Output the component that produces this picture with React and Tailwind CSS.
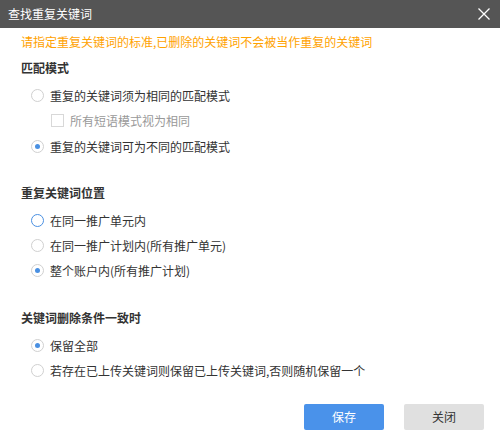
import React from "react";

const font = { fontFamily: '"Noto Sans CJK SC", "Noto Sans", sans-serif' };

function Radio({ checked, focus, label }) {
  return (
    <div className="flex h-[25px] items-center pl-[10px]">
      <span
        className={`flex h-[13px] w-[13px] items-center justify-center rounded-full border bg-white ${
          focus ? "border-[#4a90e2]" : "border-[#d0d0d0]"
        }`}
      >
        {checked && <span className="h-[5px] w-[5px] rounded-full bg-[#4a90e2]" />}
      </span>
      <span className="ml-[6px] text-[12px] leading-none text-[#333]">{label}</span>
    </div>
  );
}

function Title({ children, className = "" }) {
  return (
    <div className={`flex h-[20px] items-center text-[12px] font-bold leading-none text-[#333] ${className}`}>
      {children}
    </div>
  );
}

export default function App() {
  return (
    <div className="flex h-[446px] w-[500px] flex-col bg-white" style={font}>
      <div className="flex h-[28px] items-center justify-between bg-[#555555] pl-[8px] pr-[10px]">
        <span className="text-[12px] leading-none text-white">查找重复关键词</span>
        <svg width="12" height="12" viewBox="0 0 12 12" className="block">
          <path d="M0.5 0.5 L11.5 11.5 M11.5 0.5 L0.5 11.5" stroke="#fff" strokeWidth="1.3" />
        </svg>
      </div>
      <div className="flex flex-col px-[21px]">
        <div className="mt-[4px] flex h-[20px] items-center text-[12px] leading-none text-[#ffa200]">
          请指定重复关键词的标准,已删除的关键词不会被当作重复的关键词
        </div>
        <Title className="mt-[6px]">匹配模式</Title>
        <div className="mt-[5px]">
          <Radio label="重复的关键词须为相同的匹配模式" />
          <div className="flex h-[25px] items-center pl-[30px]">
            <span className="h-[13px] w-[13px] border border-[#d8d8d8] bg-white" />
            <span className="ml-[6px] text-[12px] leading-none text-[#999]">所有短语模式视为相同</span>
          </div>
          <div className="mt-[1px]">
            <Radio checked label="重复的关键词可为不同的匹配模式" />
          </div>
        </div>
        <Title className="mt-[24px]">重复关键词位置</Title>
        <div className="mt-[5px]">
          <Radio focus label="在同一推广单元内" />
          <Radio label="在同一推广计划内(所有推广单元)" />
          <Radio checked label="整个账户内(所有推广计划)" />
        </div>
        <Title className="mt-[25px]">关键词删除条件一致时</Title>
        <div className="mt-[5px]">
          <Radio checked label="保留全部" />
          <Radio label="若存在已上传关键词则保留已上传关键词,否则随机保留一个" />
        </div>
      </div>
      <div className="mt-[21px] flex justify-end gap-[20px] pr-[16px]">
        <button className="flex h-[26px] w-[80px] items-center justify-center rounded-[2px] bg-[#4a92ea] text-[12px] leading-none text-white">
          保存
        </button>
        <button className="flex h-[26px] w-[80px] items-center justify-center rounded-[2px] bg-[#e0e0e0] text-[12px] leading-none text-[#333]">
          关闭
        </button>
      </div>
    </div>
  );
}
